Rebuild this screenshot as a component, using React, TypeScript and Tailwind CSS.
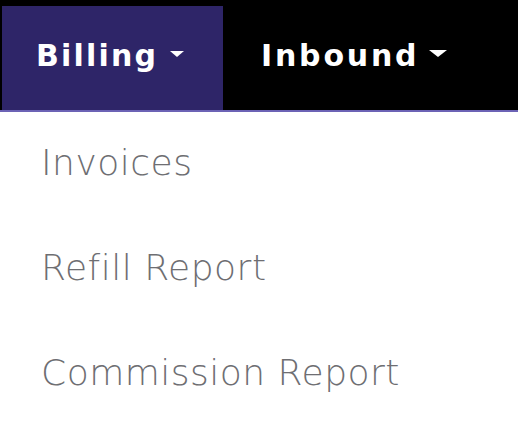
export default function App() {
  const items = ["Invoices", "Refill Report", "Commission Report"];
  return (
    <div className="w-[518px] h-[434px] bg-white overflow-hidden" style={{ fontFamily: '"DejaVu Sans", "Noto Sans", sans-serif' }}>
      {/* ── Top nav ─────────────────────────── */}
      <nav className="flex bg-black pt-[6px] pl-[2px] border-b-2 border-[#6c63b5]">
        <div className="w-[221px] h-[104px] bg-[#2e2568] flex items-center pl-[34px] pb-[5px] text-white text-[30px] font-bold tracking-[2.2px]">
          Billing
          <span className="ml-[12px] mt-[-4px] w-0 h-0 border-x-[7px] border-x-transparent border-t-[6px] border-t-white" />
        </div>
        <div className="h-[104px] flex items-center pl-[38px] pb-[5px] text-white text-[30px] font-bold tracking-[2.8px]">
          Inbound
          <span className="ml-[10px] mt-[-4px] w-0 h-0 border-x-[9px] border-x-transparent border-t-[7px] border-t-white" />
        </div>
      </nav>

      {/* ── Dropdown items ──────────────────── */}
      <ul className="flex flex-col pt-[26px] pl-[41px]">
        {items.map((label) => (
          <li key={label} className="h-[105px] text-[36px] font-light text-[#6e6e72] tracking-[0.5px] leading-[50px]">
            {label}
          </li>
        ))}
      </ul>
    </div>
  );
}
